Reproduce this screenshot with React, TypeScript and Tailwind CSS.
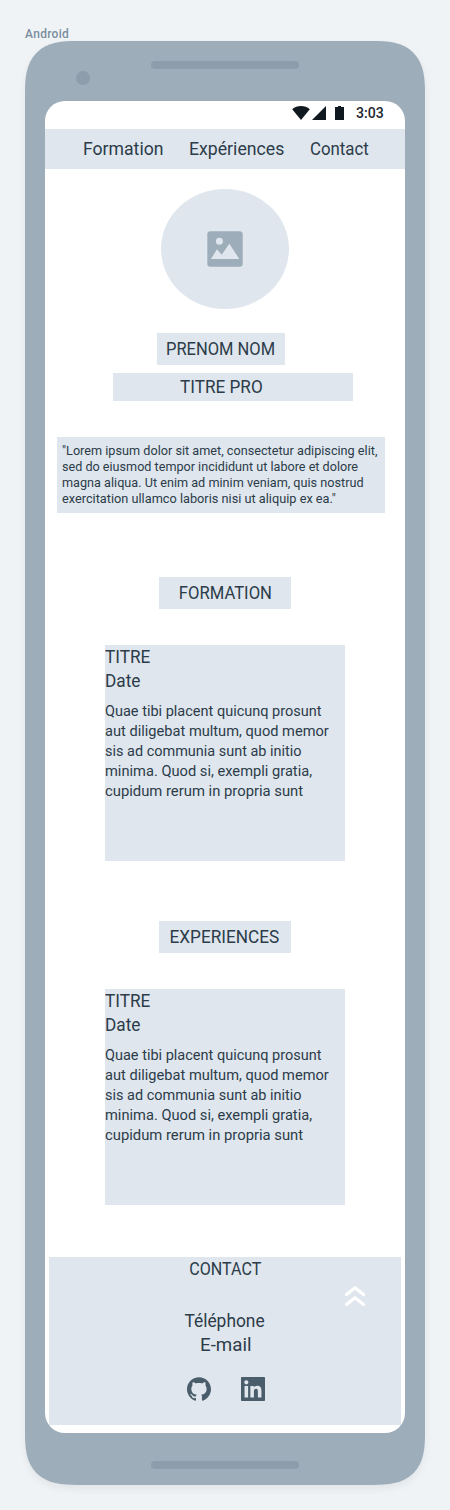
import { ReactNode } from "react";

function Line({ className, children }: { className: string; children: ReactNode }) {
  return <span className={`block w-max whitespace-nowrap ${className}`}>{children}</span>;
}

function StatusBar() {
  return (
    <div className="flex h-7 items-start">
      <svg className="ml-[247px] mt-[5px] h-[14px] w-[18px]" viewBox="0 0 18 14" fill="#101820">
        <path d="M0.2 3.2C2.6 1.1 5.7 0 9 0s6.4 1.1 8.8 3.2L9 13.9Z" />
      </svg>
      <svg className="ml-[2px] mt-[5px] h-[14px] w-[14px]" viewBox="0 0 14 14" fill="#101820">
        <path d="M14 0v14H0Z" />
      </svg>
      <svg className="ml-[9px] mt-[5px] h-[14px] w-[9px]" viewBox="0 0 9 14" fill="#101820">
        <path d="M3 0h3v1h3v13H0V1h3Z" />
      </svg>
      <Line className="ml-[11.5px] mt-[3px] origin-left scale-x-[.97] text-[14.5px] leading-5 font-medium text-[#1c272f]">
        3:03
      </Line>
    </div>
  );
}

function Heading({ children }: { children: ReactNode }) {
  return (
    <h2 className="mx-auto flex h-8 w-[132px] items-center justify-center bg-[#dfe6ee]">{children}</h2>
  );
}

function Card() {
  return (
    <article className="mx-auto mt-9 h-[216px] w-60 bg-[#dfe6ee]">
      <Line className="origin-left scale-x-[.957] leading-6">TITRE</Line>
      <Line className="origin-left scale-x-[.957] leading-6">Date</Line>
      <div className="mt-2 text-[15px] leading-5">
        <Line className="origin-left scale-x-[.967]">Quae tibi placent quicunq prosunt</Line>
        <Line className="origin-left scale-x-[.975]">aut diligebat multum, quod memor</Line>
        <Line className="origin-left scale-x-[.964]">sis ad communia sunt ab initio</Line>
        <Line className="origin-left scale-x-[.977]">minima. Quod si, exempli gratia,</Line>
        <Line className="origin-left scale-x-[.987]">cupidum rerum in propria sunt</Line>
      </div>
    </article>
  );
}

function Screen() {
  return (
    <div className="mx-5 h-[1332px] overflow-hidden rounded-[20px] bg-white text-lg text-[#2c3c49]">
      <StatusBar />
      <nav className="flex h-10 items-center bg-[#dfe6ee]">
        <div className="w-[107px] pl-[37.7px]">
          <Line className="origin-left scale-x-[.979]">Formation</Line>
        </div>
        <div className="w-30 pl-[36.7px]">
          <Line className="origin-left scale-x-[.982]">Expériences</Line>
        </div>
        <div className="pl-[37.5px]">
          <Line className="origin-left scale-x-[.935]">Contact</Line>
        </div>
      </nav>

      <div className="mx-auto mt-5 flex h-30 w-32 items-center justify-center rounded-[50%] bg-[#dfe6ee]">
        <svg className="h-9 w-9" viewBox="0 0 36 36">
          <rect x="0.3" y="0.3" width="35.4" height="35.4" rx="3" fill="#9eadba" />
          <circle cx="12.4" cy="10.3" r="3.5" fill="#dfe6ee" />
          <path d="M4 28l6-9.7 4.7 5.4 7.6-11L32.3 28Z" fill="#dfe6ee" />
        </svg>
      </div>

      <h1 className="mt-6 ml-28 flex h-8 w-32 items-center justify-center bg-[#dfe6ee]">
        <Line className="scale-x-[.916]">PRENOM NOM</Line>
      </h1>
      <div className="mt-2 ml-[68px] flex h-7 w-60 items-center justify-center bg-[#dfe6ee] pr-6">
        <Line className="scale-x-[.953]">TITRE PRO</Line>
      </div>

      <div className="mt-9 ml-3 h-[76px] w-[328px] bg-[#dfe6ee] pt-1.5 pl-[5px] text-[13px] leading-4">
        <Line className="origin-left scale-x-[.975]">"Lorem ipsum dolor sit amet, consectetur adipiscing elit,</Line>
        <Line className="origin-left scale-x-[.970]">sed do eiusmod tempor incididunt ut labore et dolore</Line>
        <Line className="origin-left scale-x-[.974]">magna aliqua. Ut enim ad minim veniam, quis nostrud</Line>
        <Line className="origin-left scale-x-[.980]">exercitation ullamco laboris nisi ut aliquip ex ea."</Line>
      </div>

      <section className="mt-16">
        <Heading>
          <Line className="scale-x-[.924]">FORMATION</Line>
        </Heading>
        <Card />
      </section>

      <section className="mt-15">
        <Heading>
          <Line className="mr-px scale-x-[.956]">EXPERIENCES</Line>
        </Heading>
        <Card />
      </section>

      <footer className="relative mx-1 mt-[52px] flex h-[168px] flex-col items-center bg-[#dfe6ee] leading-6">
        <Line className="scale-x-[.893]">CONTACT</Line>
        <Line className="mt-7 scale-x-[.965]">Téléphone</Line>
        <Line className="ml-px scale-x-[1.04]">E-mail</Line>
        <div className="mt-5 flex gap-[30px] pl-0.5">
          <svg className="h-6 w-6" viewBox="0 0 24 24" fill="#4a5d6b">
            <path d="M12 .297c-6.63 0-12 5.373-12 12 0 5.303 3.438 9.8 8.205 11.385.6.113.82-.258.82-.577 0-.285-.01-1.04-.015-2.04-3.338.724-4.042-1.61-4.042-1.61C4.422 18.07 3.633 17.7 3.633 17.7c-1.087-.744.084-.729.084-.729 1.205.084 1.838 1.236 1.838 1.236 1.07 1.835 2.809 1.305 3.495.998.108-.776.417-1.305.76-1.605-2.665-.3-5.466-1.332-5.466-5.93 0-1.31.465-2.38 1.235-3.22-.135-.303-.54-1.523.105-3.176 0 0 1.005-.322 3.3 1.23.96-.267 1.98-.399 3-.405 1.02.006 2.04.138 3 .405 2.28-1.552 3.285-1.23 3.285-1.23.645 1.653.24 2.873.12 3.176.765.84 1.23 1.91 1.23 3.22 0 4.61-2.805 5.625-5.475 5.92.42.36.81 1.096.81 2.22 0 1.606-.015 2.896-.015 3.286 0 .315.21.69.825.57C20.565 22.092 24 17.592 24 12.297c0-6.627-5.373-12-12-12" />
          </svg>
          <svg className="h-6 w-6" viewBox="0 0 24 24" fill="#4a5d6b">
            <path d="M20.447 20.452h-3.554v-5.569c0-1.328-.027-3.037-1.852-3.037-1.853 0-2.136 1.445-2.136 2.939v5.667H9.351V9h3.414v1.561h.046c.477-.9 1.637-1.85 3.37-1.85 3.601 0 4.267 2.37 4.267 5.455v6.286zM5.337 7.433c-1.144 0-2.063-.926-2.063-2.065 0-1.138.92-2.063 2.063-2.063 1.14 0 2.064.925 2.064 2.063 0 1.139-.925 2.065-2.064 2.065zm1.782 13.019H3.555V9h3.564v11.452zM23 0H1C.4 0 0 .4 0 1v22c0 .6.4 1 1 1h22c.6 0 1-.4 1-1V1c0-.6-.4-1-1-1z" />
          </svg>
        </div>
        <svg
          className="absolute top-7 right-[35px] h-[22px] w-[22px]"
          viewBox="0 0 22 22"
          fill="none"
          stroke="#fff"
          strokeWidth="3.2"
          strokeLinecap="round"
          strokeLinejoin="round"
        >
          <path d="M2.5 9.4L11 2.8l8.5 6.6M2.5 19.4L11 12.8l8.5 6.6" />
        </svg>
      </footer>
    </div>
  );
}

export default function App() {
  return (
    <div className="flex h-[1510px] w-[450px] flex-col bg-[#eff3f6] px-[25px] pt-[26px] font-['Roboto',sans-serif]">
      <div className="h-[15px] text-xs leading-4 font-medium tracking-[.3px] text-[#7b8e9e]">Android</div>
      <div className="h-[1444px] rounded-[52px] bg-[#9eadba] shadow-[0_4px_8px_rgba(0,0,0,0.06)] [corner-shape:superellipse(1.45)]">
        <div className="relative flex h-15 justify-center pt-5">
          <div className="h-2 w-37 rounded bg-[#8d9dac]" />
          <div className="absolute top-[30px] left-[51px] h-3.5 w-3.5 rounded-full bg-[#8d9dac]" />
        </div>
        <Screen />
        <div className="flex justify-center pt-7">
          <div className="h-2 w-37 rounded bg-[#8d9dac]" />
        </div>
      </div>
    </div>
  );
}
